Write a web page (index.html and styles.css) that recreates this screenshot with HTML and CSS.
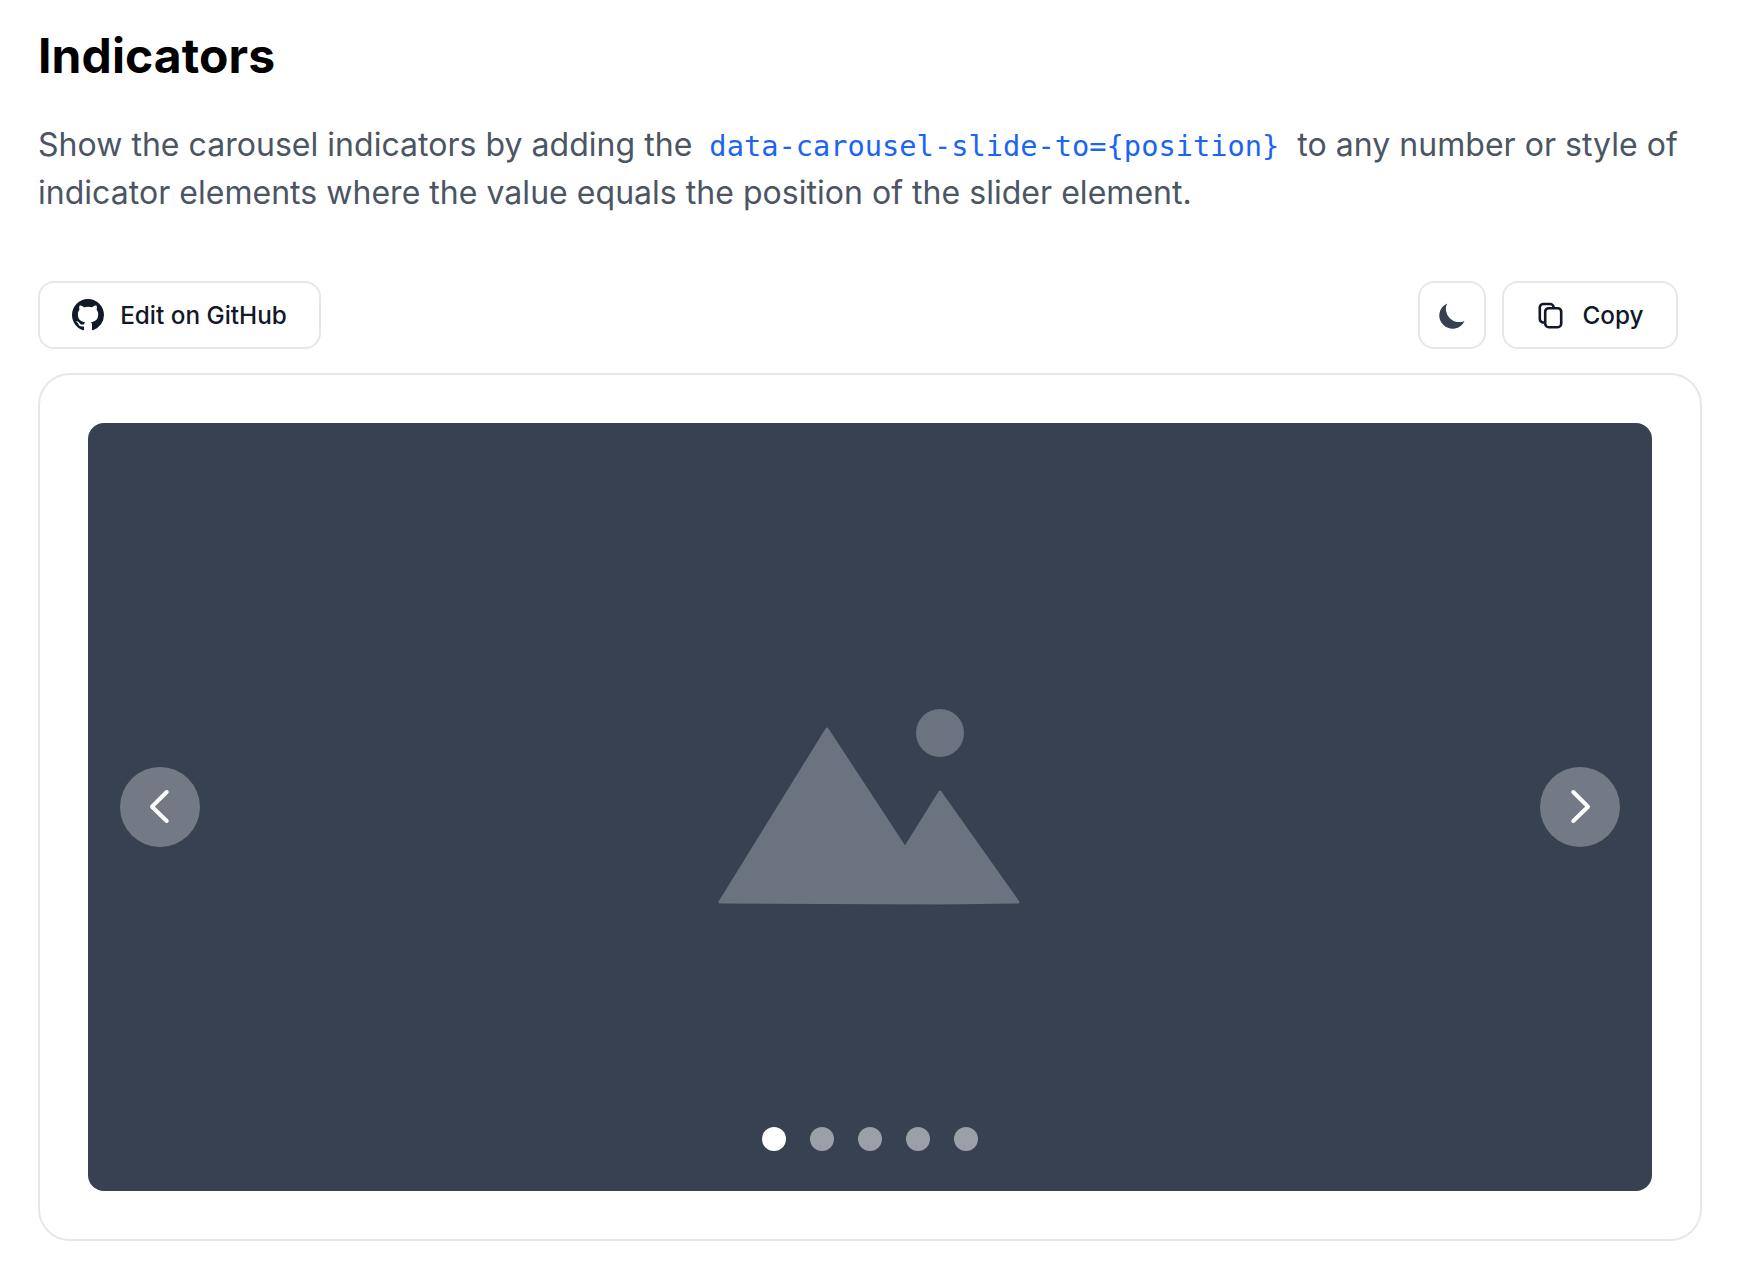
FILE: index.html
```html
<!DOCTYPE html>
<html lang="en">
<head>
<meta charset="utf-8">
<title>Indicators</title>
<link rel="stylesheet" href="styles.css">
</head>
<body>
<main class="page">
  <h2 class="title">Indicators</h2>
  <p class="lead">Show the carousel indicators by adding the <code class="code">data-carousel-slide-to={position}</code> to any number or style of indicator elements where the value equals the position of the slider element.</p>
  <div class="toolbar">
    <a class="btn btn-text">
      <svg class="icon-github" viewBox="0 0 16 16" aria-hidden="true"><path fill="#111827" fill-rule="evenodd" d="M8 0C3.58 0 0 3.58 0 8c0 3.54 2.29 6.53 5.47 7.59.4.07.55-.17.55-.38 0-.19-.01-.82-.01-1.49-2.01.37-2.53-.49-2.69-.94-.09-.23-.48-.94-.82-1.13-.28-.15-.68-.52-.01-.53.63-.01 1.08.58 1.23.82.72 1.21 1.87.87 2.33.66.07-.52.28-.87.51-1.07-1.78-.2-3.64-.89-3.64-3.95 0-.87.31-1.59.82-2.15-.08-.2-.36-1.02.08-2.12 0 0 .67-.21 2.2.82.64-.18 1.32-.27 2-.27.68 0 1.36.09 2 .27 1.53-1.04 2.2-.82 2.2-.82.44 1.1.16 1.92.08 2.12.51.56.82 1.27.82 2.15 0 3.07-1.87 3.75-3.65 3.95.29.25.54.73.54 1.48 0 1.07-.01 1.93-.01 2.2 0 .21.15.46.55.38A8.013 8.013 0 0016 8c0-4.42-3.58-8-8-8z"/></svg>
      <span>Edit on GitHub</span>
    </a>
    <div class="toolbar-actions">
      <button class="btn btn-square" type="button" aria-label="Toggle dark mode">
        <svg class="icon-moon" viewBox="0 0 20 20" aria-hidden="true"><path fill="#374151" d="M17.293 13.293A8 8 0 016.707 2.707a8.001 8.001 0 1010.586 10.586z"/></svg>
      </button>
      <button class="btn btn-copy" type="button">
        <svg class="icon-copy" viewBox="0 0 28 28" aria-hidden="true"><rect class="copy-front" x="9.2" y="7.2" width="16" height="19" rx="3.5"/><path class="copy-back" d="M8.5 21.5H7a3.7 3.7 0 0 1-3.2-3.5V6A3.7 3.7 0 0 1 7 3h7a3.7 3.7 0 0 1 3.7 3.7"/></svg>
        <span>Copy</span>
      </button>
    </div>
  </div>
  <section class="card">
    <div class="carousel">
      <svg class="placeholder" viewBox="0 0 320 200" aria-hidden="true">
        <path class="mountain" d="M117 22 10 195 230 196 308 195 230 85 195 141Z"/>
        <circle class="sun" cx="230" cy="26" r="24"/>
      </svg>
      <button class="nav nav-prev" type="button" aria-label="Previous">
        <svg viewBox="0 0 40 40" aria-hidden="true"><path d="M26.7 5 12 19.7 26.7 34"/></svg>
      </button>
      <button class="nav nav-next" type="button" aria-label="Next">
        <svg viewBox="0 0 40 40" aria-hidden="true"><path d="M13.3 5 28 19.7 13.3 34"/></svg>
      </button>
      <div class="dots">
        <span class="dot dot-active"></span>
        <span class="dot"></span>
        <span class="dot"></span>
        <span class="dot"></span>
        <span class="dot"></span>
      </div>
    </div>
  </section>
</main>
</body>
</html>
```

FILE: styles.css
```css
* { box-sizing: border-box; }
html, body { margin: 0; background: #fff; }
body { font-family: Inter, "Liberation Sans", sans-serif; }
.page { width: 1702px; padding: 24px 0 0 38px; }
.title { margin: 0; font-size: 48px; line-height: 64px; font-weight: 700; color: #000; letter-spacing: 0.1px; }
.lead { margin: 33px 0 0; width: 1650px; font-size: 32px; line-height: 48px; color: #4b5563; letter-spacing: 0.03px; }
.code { font-family: "DejaVu Sans Mono", monospace; font-size: 28.7px; line-height: 1; letter-spacing: 0; color: #1c64f2; padding: 0 9px 0 8px; }
.toolbar { display: flex; justify-content: space-between; width: 1640px; margin-top: 64px; }
.toolbar-actions { display: flex; gap: 16px; }
.btn { display: flex; align-items: center; justify-content: center; height: 68px; border: 2px solid #e5e7eb; border-radius: 16px; background: #fff; padding: 0; font-family: inherit; font-size: 24.3px; font-weight: 500; color: #111827; }
.btn-text { width: 283px; gap: 16px; }
.btn-square { width: 68px; }
.btn-copy { width: 176px; gap: 18px; }
.icon-github { width: 32px; height: 32px; }
.icon-moon { width: 33px; height: 33px; }
.icon-copy { width: 28px; height: 28px; }
.copy-front, .copy-back { fill: none; stroke: #111827; stroke-width: 2.6; stroke-linecap: round; }
.card { margin-top: 24px; height: 868px; border: 2px solid #e5e7eb; border-radius: 32px; padding: 48px; background: #fff; }
.carousel { position: relative; display: flex; align-items: center; justify-content: center; height: 768px; background: #374151; border-radius: 16px; }
.placeholder { width: 320px; height: 200px; }
.mountain { fill: #6b7280; stroke: #6b7280; stroke-width: 3; stroke-linejoin: round; }
.sun { fill: #6b7280; }
.nav { position: absolute; top: 344px; width: 80px; height: 80px; border: 0; padding: 0; border-radius: 50%; background: rgba(255, 255, 255, 0.3); display: flex; align-items: center; justify-content: center; }
.nav svg { width: 40px; height: 40px; fill: none; stroke: #fff; stroke-width: 4; stroke-linecap: round; stroke-linejoin: round; }
.nav-prev { left: 32px; }
.nav-next { right: 32px; }
.dots { position: absolute; left: 0; right: 0; bottom: 40px; display: flex; justify-content: center; gap: 24px; }
.dot { width: 24px; height: 24px; border-radius: 50%; background: rgba(255, 255, 255, 0.5); }
.dot-active { background: #fff; }
```
